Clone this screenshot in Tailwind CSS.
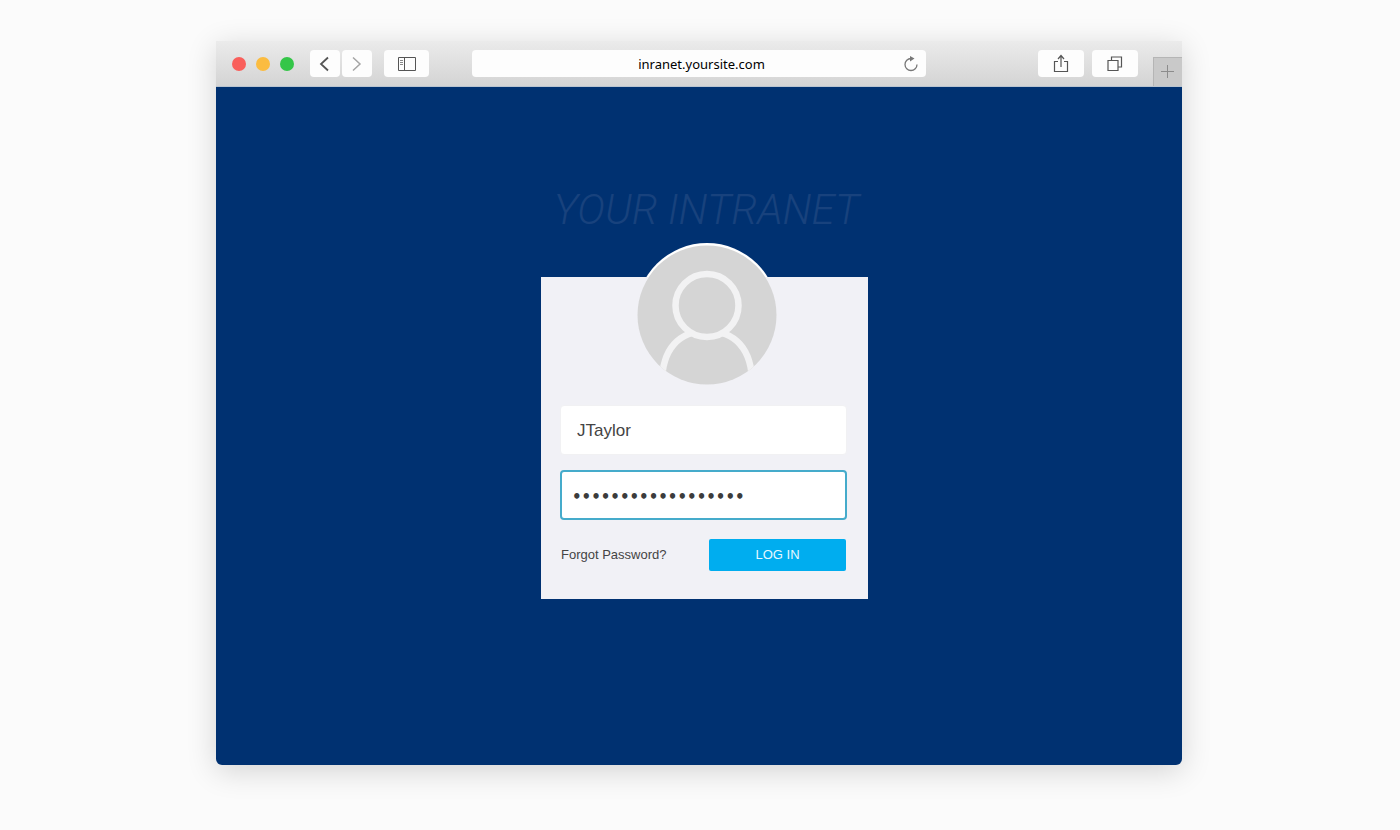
<!DOCTYPE html>
<html lang="en">
<head>
<meta charset="utf-8">
<meta name="viewport" content="width=device-width, initial-scale=1">
<title>Your Intranet</title>
<script src="https://cdn.jsdelivr.net/npm/@tailwindcss/browser@4"></script>
</head>
<body class="min-h-screen bg-[#fbfbfb] pt-[41px] pr-[18px] pb-16 pl-4 font-['Liberation_Sans',Arial,sans-serif]">
<div class="mx-auto flex w-full max-w-[966px] flex-col overflow-hidden rounded-b-md shadow-[0_6px_30px_rgba(0,0,0,0.16)]">
  <header class="grid h-[46px] grid-cols-[1fr_minmax(0,454px)_1fr] items-center border-b border-[#b9c4d0] bg-linear-to-b from-[#ebebeb] to-[#d4d4d4]">
    <div class="flex items-center pl-4">
      <div class="flex gap-[10px]">
        <button type="button" aria-label="Close" class="size-[14px] rounded-full bg-[#f95f5b]"></button>
        <button type="button" aria-label="Minimize" class="size-[14px] rounded-full bg-[#fbbc40]"></button>
        <button type="button" aria-label="Zoom" class="size-[14px] rounded-full bg-[#34c648]"></button>
      </div>
      <div class="ml-4 flex gap-[2px]">
        <button type="button" aria-label="Back" class="grid h-[27px] w-[30px] place-items-center rounded bg-[#fdfdfd]">
          <svg class="h-4 w-3" viewBox="0 0 12 16" fill="none" stroke="#555" stroke-width="1.8"><path d="M9 1.500L2 8L9 14.500"/></svg>
        </button>
        <button type="button" aria-label="Forward" class="grid h-[27px] w-[30px] place-items-center rounded bg-[#fdfdfd]">
          <svg class="h-4 w-3" viewBox="0 0 12 16" fill="none" stroke="#a5a5a5" stroke-width="1.500"><path d="M2 1.500L9 8L2 14.500"/></svg>
        </button>
      </div>
      <button type="button" aria-label="Show sidebar" class="ml-3 grid h-[27px] w-[45px] place-items-center rounded bg-[#fdfdfd]">
        <svg class="h-4 w-5" viewBox="0 0 20 16" fill="none" stroke="#555"><path d="M1.500 1.500h17v13h-17zM7.500 1.500v13"/><path d="M3 4.500h3M3 6.500h3M3 8.500h3" stroke="#888"/></svg>
      </button>
    </div>
    <div class="flex h-[27px] items-center rounded bg-[#fdfdfd] pr-[7px] pl-7">
      <input type="text" aria-label="Address" value="inranet.yoursite.com" class="min-w-0 flex-1 bg-transparent text-center font-['Noto_Sans',sans-serif] text-[13px] leading-5 text-black outline-none">
      <button type="button" aria-label="Reload" class="size-4">
        <svg class="size-4" viewBox="0 0 16 16" fill="none" stroke="#777" stroke-width="1.300"><path d="M8 2.500A6 6 0 1 0 14 8.500"/><path d="M7 0L11.500 2.500L7 5.500z" fill="#777" stroke="none"/></svg>
      </button>
    </div>
    <div class="flex h-[45px] items-center justify-end">
      <button type="button" aria-label="Share" class="grid h-[27px] w-[46px] place-items-center rounded bg-[#fdfdfd]">
        <svg class="h-5 w-4" viewBox="0 0 16 20" fill="none" stroke="#555" stroke-width="1.200"><path d="M5 7.500h-3.500v10h13v-10h-3.500M8 13V1.500M5 5L8 1.500L11 5"/></svg>
      </button>
      <button type="button" aria-label="Show tabs" class="ml-2 grid h-[27px] w-[46px] place-items-center rounded bg-[#fdfdfd]">
        <svg class="size-4" viewBox="0 0 16 16" fill="none" stroke="#555" stroke-width="1.200"><path d="M1 4.500h10v10h-10zM4.500 4.500v-3.500h10v10h-3.500"/></svg>
      </button>
      <button type="button" aria-label="New tab" class="ml-[15px] grid h-[29px] w-[29px] place-items-center self-end border-t border-l border-[#b5b5b5] bg-[#c9c9c9]">
        <svg class="size-4" viewBox="0 0 16 16" fill="none" stroke="#8c8c8c"><path d="M7.500 1v13M1 7.500h13"/></svg>
      </button>
    </div>
  </header>
  <main class="flex flex-col items-center bg-[#003171] pt-[98px] pb-[166px] pl-[11px]">
    <h1 class="pt-px pl-1 font-['Roboto',sans-serif] text-[42px] leading-[48px] font-light text-[#18427d] italic">YOUR INTRANET</h1>
    <form class="mt-[43px] flex w-full max-w-[327px] flex-col bg-[#f1f1f6] pr-[21px] pb-7 pl-[19px]" onsubmit="return false">
      <svg class="-mt-[34px] ml-[6px] size-[142px] self-center" viewBox="0 0 142 142" role="img" aria-label="User">
        <defs>
          <clipPath id="disc"><circle cx="71" cy="72" r="69.500"/></clipPath>
          <clipPath id="rim"><path d="M0 0h142v34H0z"/></clipPath>
        </defs>
        <circle cx="71" cy="71" r="71" fill="#fff" clip-path="url(#rim)"/>
        <circle cx="71" cy="72" r="69.500" fill="#d5d5d5"/>
        <g fill="none" stroke="#f2f2f3" stroke-width="6.500" clip-path="url(#disc)">
          <path d="M26 140C26 106 43 88 71 88S116 106 116 140"/>
          <circle cx="71" cy="62.500" r="31.500" fill="#d5d5d5"/>
        </g>
      </svg>
      <input type="text" aria-label="Username" value="JTaylor" class="mt-5 h-[50px] w-full rounded-sm border border-[#f1f1f3] bg-white px-4 pt-[2px] text-[17px] text-[#444] outline-none">
      <input type="password" aria-label="Password" value="intranet-pass-2018" class="mt-[15px] h-[50px] w-full rounded-sm border-2 border-[#45abcb] bg-white px-[10px] pt-1 font-['DejaVu_Sans',sans-serif] text-[15px] font-bold text-[#3c3c3c] outline-none">
      <div class="mt-[19px] flex items-center justify-between px-px">
        <a href="#" class="text-[13px] leading-5 text-[#444]">Forgot Password?</a>
        <button type="submit" class="h-8 w-[137px] rounded-xs bg-[#00adef] text-[13px] leading-5 text-[#e6f8ff]">LOG IN</button>
      </div>
    </form>
  </main>
</div>
</body>
</html>
